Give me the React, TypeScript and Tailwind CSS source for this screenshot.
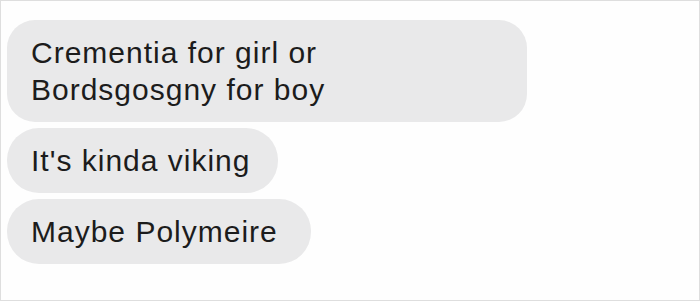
import React from "react";

const Bubble = ({ children, w }: { children: React.ReactNode; w: string }) => (
  <div
    className={`self-start rounded-[32px] bg-[#e9e9ea] pl-[24px] py-[14px] text-[30px] leading-[37px] tracking-[1px] text-[#1c1c1c] ${w}`}
  >
    {children}
  </div>
);

export default function App() {
  return (
    <div
      className="w-[700px] h-[301px] border border-[#dedede] bg-[#fefefe] overflow-hidden"
      style={{ fontFamily: '"Liberation Sans", Arial, sans-serif' }}
    >
      <div className="flex flex-col gap-[6px] pl-[6px] pt-[19px]">
        <div className="self-start rounded-[28px] bg-[#e9e9ea] pl-[24px] py-[14px] text-[30px] leading-[37px] tracking-[1px] text-[#1c1c1c] w-[520px]">
          Crementia for girl or
          <br />
          Bordsgosgny for boy
        </div>
        <Bubble w="w-[271px]">It's kinda viking</Bubble>
        <Bubble w="w-[304px]">Maybe Polymeire</Bubble>
      </div>
    </div>
  );
}
